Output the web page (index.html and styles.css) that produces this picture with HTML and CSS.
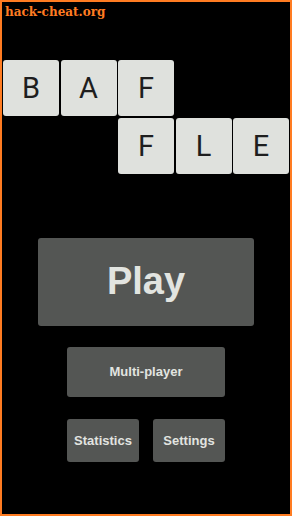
FILE: index.html
```html
<!DOCTYPE html>
<html>
<head>
<meta charset="utf-8">
<link rel="stylesheet" href="styles.css">
</head>
<body>
<div class="screen">
  <div class="watermark">hack-cheat.org</div>
  <div class="logo">
    <div class="tile c1 r1">B</div>
    <div class="tile c2 r1">A</div>
    <div class="tile c3 r1">F</div>
    <div class="tile c3 r2">F</div>
    <div class="tile c4 r2">L</div>
    <div class="tile c5 r2">E</div>
  </div>
  <div class="menu">
    <div class="btn play">Play</div>
    <div class="btn multi">Multi-player</div>
    <div class="row">
      <div class="btn small">Statistics</div>
      <div class="btn small">Settings</div>
    </div>
  </div>
</div>
</body>
</html>
```
FILE: styles.css
```css
html, body {
  margin: 0;
  padding: 0;
  background: #000;
}
.screen {
  box-sizing: border-box;
  width: 292px;
  height: 516px;
  border: 2px solid #ff7c22;
  background: #000;
  position: relative;
  overflow: hidden;
}
.watermark {
  position: absolute;
  left: 3px;
  top: 3px;
  font-family: "DejaVu Serif", serif;
  font-weight: bold;
  font-size: 12px;
  color: #ff7c22;
}
.logo {
  display: grid;
  grid-template-columns: repeat(5, 56px);
  grid-template-rows: 56px 56px;
  column-gap: 1.5px;
  row-gap: 1.5px;
  padding: 58px 0 0 1px;
}
.tile {
  background: #dfe1dd;
  border-radius: 3px;
  display: flex;
  align-items: center;
  justify-content: center;
  font-family: Roboto, "Noto Sans", sans-serif;
  font-weight: 400;
  font-size: 29px;
  color: #1e1e1e;
}
.c1 { grid-column: 1; }
.c2 { grid-column: 2; }
.c3 { grid-column: 3; }
.c4 { grid-column: 4; }
.c5 { grid-column: 5; }
.r1 { grid-row: 1; }
.r2 { grid-row: 2; }
.menu {
  display: flex;
  flex-direction: column;
  align-items: center;
  padding-top: 64px;
}
.btn {
  background: #545654;
  border-radius: 3px;
  color: #e2e4e0;
  font-family: "Liberation Sans", Arial, sans-serif;
  font-weight: bold;
  display: flex;
  align-items: center;
  justify-content: center;
}
.play {
  width: 216px;
  height: 88px;
  font-size: 38px;
}
.multi {
  width: 158px;
  height: 50px;
  font-size: 13px;
  margin-top: 21px;
}
.row {
  display: flex;
  gap: 14px;
  margin-top: 22px;
}
.small {
  width: 72px;
  height: 43px;
  font-size: 13px;
}
```
